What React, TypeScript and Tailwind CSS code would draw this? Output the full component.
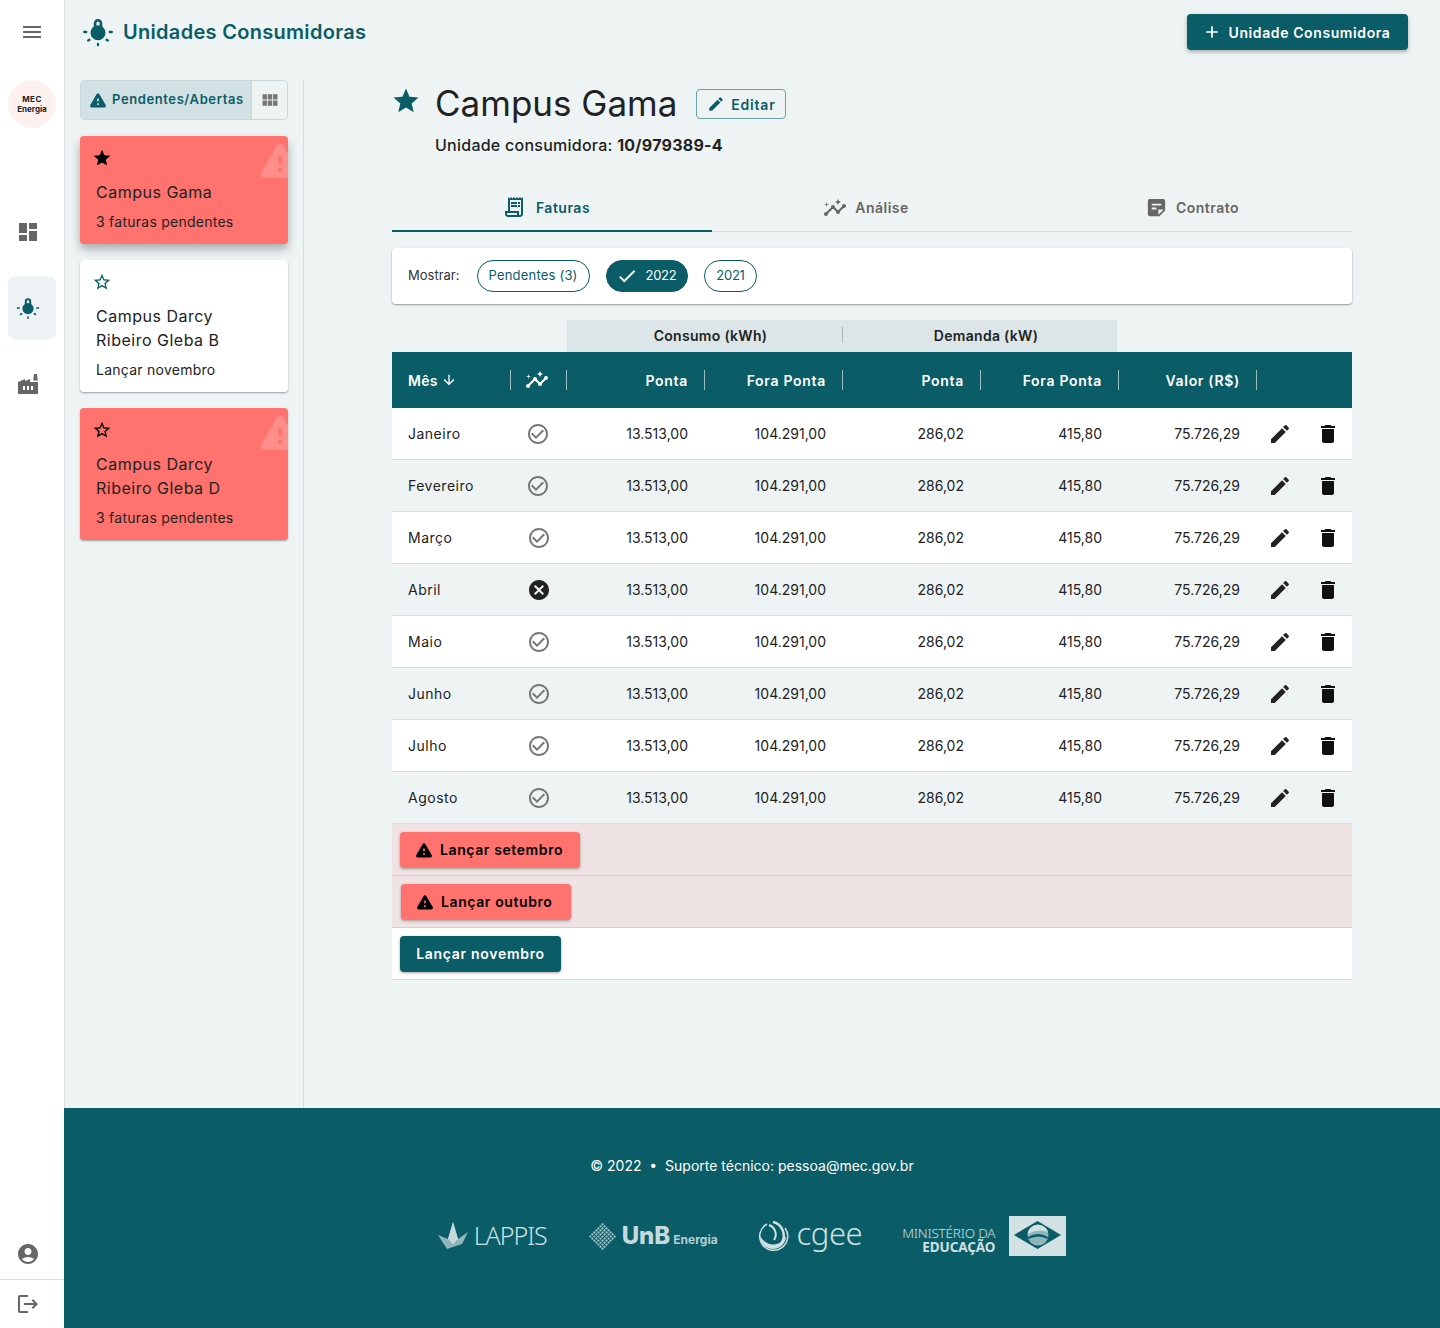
import React from "react";
import {
  MdMenu, MdDashboard, MdFactory, MdAccountCircle, MdLogout, MdViewModule, MdStar, MdStarBorder,
  MdEdit, MdDelete, MdAdd, MdCheck, MdOutlineReceiptLong, MdInsights, MdStickyNote2, MdArrowDownward,
  MdCheckCircleOutline, MdCancel,
} from "react-icons/md";

function Warn({ className }: { className?: string }) {
  return (
    <svg viewBox="0 0 24 24" fill="currentColor" className={className}>
      <path d="M4.47 21h15.06c1.54 0 2.5-1.67 1.73-3L13.73 4.99c-.77-1.33-2.69-1.33-3.46 0L2.74 18c-.77 1.33.19 3 1.73 3zM12 14c-.55 0-1-.45-1-1v-2c0-.55.45-1 1-1s1 .45 1 1v2c0 .55-.45 1-1 1zm1 4h-2v-2h2v2z" />
    </svg>
  );
}

function Bulb({ className }: { className?: string }) {
  return (
    <svg viewBox="0 0 24 24" className={className} fill="none">
      <circle cx="12" cy="12.6" r="5.6" fill="currentColor" />
      <path fillRule="evenodd" clipRule="evenodd" fill="currentColor" d="M12 2.2a3.2 3.2 0 0 1 3.2 3.2V9H8.8V5.4A3.2 3.2 0 0 1 12 2.2zm0 2a1.2 1.2 0 0 0-1.2 1.2V8h2.4V5.4A1.2 1.2 0 0 0 12 4.2z" />
      <path stroke="currentColor" strokeWidth="1.7" strokeLinecap="round" d="M1.6 12h1.6M20.8 12h1.6M12 21v1M4.6 18.4l1-.6M19.4 18.4l-1-.6" />
    </svg>
  );
}

function UnitCard({ title, sub, alert, star, tall, shadow }: { title: string[]; sub: string; alert?: boolean; star?: boolean; tall?: boolean; shadow?: string }) {
  return (
    <div className={`relative overflow-hidden rounded px-4 pt-3 ${tall ? "h-[132px]" : "h-[108px]"} ${alert ? "bg-[#ff726d]" : "bg-white"} ${shadow ?? "shadow-[0_1px_2px_rgba(0,0,0,0.35)]"}`}>
      {alert && <Warn className="absolute right-[-16px] top-0 h-12 w-12 text-white/20" />}
      {star ? <MdStar className="-ml-[4px] h-5 w-5 text-black" /> : <MdStarBorder className={`-ml-[4px] h-5 w-5 ${alert ? "text-black" : "text-[#0a5c67]"}`} />}
      <div className="mt-[12px] text-[16px] leading-6 tracking-[0.5px] text-[#222]">
        {title.map((t) => <div key={t}>{t}</div>)}
      </div>
      <div className="mt-[8px] text-[14px] leading-5 tracking-[0.25px] text-[#222]">{sub}</div>
    </div>
  );
}

const months = [
  ["Janeiro", "ok", false], ["Fevereiro", "ok", false], ["Março", "ok", true], ["Abril", "x", true],
  ["Maio", "ok", true], ["Junho", "ok", true], ["Julho", "ok", true], ["Agosto", "ok", true],
] as const;

const COLS = "grid grid-cols-[119px_56px_138px_138px_138px_138px_138px_47px_48px] items-center";

function Th({ children, right = true }: { children: React.ReactNode; right?: boolean }) {
  return <div className={`flex h-5 items-center border-r border-white/60 pr-4 text-[14px] font-semibold text-white ${right ? "justify-end tracking-[0.7px]" : ""}`}>{children}</div>;
}

function Num({ children }: { children: React.ReactNode }) {
  return <div className="pr-[17px] text-right text-[14px] text-[#222]">{children}</div>;
}

function Chip({ children, on }: { children: React.ReactNode; on?: boolean }) {
  return <div className={`flex h-8 items-center gap-2 rounded-full border border-[#0a5c67] px-[11px] text-[13px] tracking-[0.2px] ${on ? "bg-[#0a5c67] text-white" : "text-[#0a5c67]"}`}>{children}</div>;
}

export default function App() {
  return (
    <div className="flex min-h-[1328px] w-[1440px] bg-[#eef4f4] [font-family:Inter,'Noto_Sans',sans-serif] text-[#222]">
      <aside className="flex w-[65px] shrink-0 flex-col border-r border-[#dde3e3] bg-white">
        <div className="flex h-16 items-center justify-center text-[#666]"><MdMenu className="h-6 w-6" /></div>
        <div className="mx-2 mt-4 flex h-12 w-12 flex-col items-center justify-center rounded-full bg-[#fdf1f0] text-[8px] font-bold leading-[10px] text-[#222]">
          <span className="tracking-[0.5px]">MEC</span><span>Energia</span>
        </div>
        <div className="mt-[92px] flex h-6 pl-4 text-[#666]"><MdDashboard className="h-6 w-6" /></div>
        <div className="mx-2 mt-[32px] flex h-16 w-12 items-center rounded-lg bg-[#edf2f4] pl-2 text-[#0a5c67]"><Bulb className="h-6 w-6" /></div>
        <div className="mt-[32px] flex h-6 pl-4 text-[#666]"><MdFactory className="h-6 w-6" /></div>
        <div className="flex-1" />
        <div className="flex h-[37px] items-start pl-4 text-[#666]"><MdAccountCircle className="h-6 w-6" /></div>
        <div className="flex h-[49px] items-center border-t border-[#ddd] pl-4 text-[#666]"><MdLogout className="h-6 w-6" /></div>
      </aside>

      <div className="flex min-w-0 flex-1 flex-col">
        <header className="flex h-16 shrink-0 items-center justify-between pl-[17px] pr-8">
          <div className="flex items-center gap-[9px] text-[#0a5c67]">
            <Bulb className="h-8 w-8" />
            <h1 className="text-[20px] font-semibold tracking-[0.3px]">Unidades Consumidoras</h1>
          </div>
          <button className="flex h-9 w-[221px] items-center justify-center gap-[7px] rounded bg-[#0a5c67] pr-[3px] text-[14px] font-semibold tracking-[0.6px] text-white shadow-[0_2px_4px_rgba(0,0,0,0.3)]">
            <MdAdd className="h-5 w-5" />Unidade Consumidora
          </button>
        </header>

        <div className="flex flex-1">
          <div className="mt-4 w-[239px] shrink-0 border-r border-[#d5dcdc] pl-[15px] pr-[15px]">
            <div className="flex h-10 w-[208px] overflow-hidden rounded border border-[#c9d8da]">
              <div className="flex w-[171px] items-center gap-[4px] border-r border-[#c9d8da] bg-[#d2e1e3] pl-[7px] text-[13px] font-semibold tracking-[0.6px] text-[#0a5c67]">
                <Warn className="h-5 w-5 shrink-0" />Pendentes/Abertas
              </div>
              <div className="flex flex-1 items-center justify-center text-[#777]"><MdViewModule className="h-5 w-5" /></div>
            </div>
            <div className="mt-4 flex flex-col gap-4">
              <UnitCard title={["Campus Gama"]} sub="3 faturas pendentes" alert star shadow="shadow-[0_5px_10px_rgba(0,0,0,0.3)]" />
              <UnitCard title={["Campus Darcy", "Ribeiro Gleba B"]} sub="Lançar novembro" tall />
              <UnitCard title={["Campus Darcy", "Ribeiro Gleba D"]} sub="3 faturas pendentes" alert tall />
            </div>
          </div>

          <main className="ml-[88px] w-[960px] shrink-0 pt-[16px]">
            <div className="flex h-[48px] items-center">
              <MdStar className="h-[30px] w-[30px] -translate-y-[3px] text-[#0a5c67] -ml-[1px]" />
              <h2 className="ml-[14px] pb-[2px] text-[35px] font-normal leading-10 text-[#222]">Campus Gama</h2>
              <button className="ml-[19px] flex h-[30px] w-[90px] items-center justify-center gap-[6px] rounded border border-[#6ca0a8] text-[14px] font-semibold tracking-[0.8px] text-[#0a5c67]">
                <MdEdit className="h-[18px] w-[18px]" />Editar
              </button>
            </div>
            <p className="ml-[43px] mt-[5px] text-[16px] font-medium leading-6 tracking-[0.25px] text-[#222]">Unidade consumidora: <b className="font-bold">10/979389-4</b></p>

            <div className="mt-[27px] flex h-[48px] border-b border-[#d5dcdc] tracking-[0.5px]">
              <div className="-mb-px flex w-[320px] items-center justify-center gap-[10px] border-b-2 border-[#0a5c67] pr-3 text-[14px] font-semibold text-[#0a5c67]"><MdOutlineReceiptLong className="h-6 w-6" />Faturas</div>
              <div className="flex w-[320px] items-center justify-center gap-[8px] pr-3 text-[14px] font-semibold text-[#666]"><MdInsights className="h-6 w-6" />Análise</div>
              <div className="flex w-[320px] items-center justify-center gap-[8px] text-[14px] font-semibold text-[#666]"><MdStickyNote2 className="h-[23px] w-[23px]" />Contrato</div>
            </div>

            <div className="mt-4 flex h-14 items-center rounded bg-white pl-4 shadow-[0_1px_2px_rgba(0,0,0,0.4)]">
              <span className="mr-[17px] text-[13px] text-[#333]">Mostrar:</span>
              <div className="flex gap-4">
                <Chip>Pendentes (3)</Chip>
                <Chip on><MdCheck className="-ml-[2px] h-[22px] w-[22px]" /><span className="tracking-[-0.3px]">2022</span></Chip>
                <Chip><span className="tracking-[-0.3px]">2021</span></Chip>
              </div>
            </div>

            <div className="ml-[175px] mt-4 flex h-8 w-[550px] items-center bg-[#dce6e8] pb-[2px] text-[14px] font-semibold tracking-[0.3px] text-[#222]">
              <div className="flex h-4 w-[276px] items-center justify-center border-r border-[#a9b5b7] pl-3">Consumo (kWh)</div>
              <div className="flex flex-1 items-center justify-center pl-3">Demanda (kW)</div>
            </div>

            <div className={`${COLS} h-14 bg-[#0a5c67]`}>
              <Th right={false}><span className="pl-4 tracking-[0.3px]">Mês</span><MdArrowDownward className="ml-[3px] h-4 w-4" /></Th>
              <Th right={false}><MdInsights className="ml-[14px] h-6 w-6 shrink-0" /></Th>
              <Th>Ponta</Th><Th>Fora Ponta</Th><Th>Ponta</Th><Th>Fora Ponta</Th><Th>Valor (R$)</Th>
            </div>

            {months.map(([m, st, shift], i) => (
              <div key={m} className={`${COLS} h-[52px] border-b border-[#d9dfdf] ${i % 2 === 0 ? "bg-white" : ""}`}>
                <div className="pl-4 text-[14px] tracking-[0.5px] text-[#222]">{m}</div>
                <div className={`flex ${shift ? "pl-4" : "pl-[15px]"}`}>
                  {st === "ok" ? <MdCheckCircleOutline className="h-6 w-6 text-[#777]" /> : <MdCancel className="h-6 w-6 text-[#222]" />}
                </div>
                <Num>13.513,00</Num><Num>104.291,00</Num><Num>286,02</Num><Num>415,80</Num><Num>75.726,29</Num>
                <div className="flex justify-center pr-[2px] text-[#222]"><MdEdit className="h-6 w-6" /></div>
                <div className="flex justify-center text-[#111]"><MdDelete className="h-6 w-6" /></div>
              </div>
            ))}

            <div className="flex h-[52px] items-center border-b border-[#d9cfd0] bg-[#efe3e3] pl-2">
              <button className="flex h-9 w-[180px] items-center gap-[6px] rounded bg-[#ff726d] pl-[14px] text-[14px] font-semibold tracking-[0.6px] text-black shadow-[0_1px_3px_rgba(0,0,0,0.35)]"><Warn className="h-5 w-5" />Lançar setembro</button>
            </div>
            <div className="flex h-[52px] items-center border-b border-[#d9cfd0] bg-[#efe3e3] pl-[9px]">
              <button className="flex h-9 w-[170px] items-center gap-[6px] rounded bg-[#ff726d] pl-[14px] text-[14px] font-semibold tracking-[0.6px] text-black shadow-[0_1px_3px_rgba(0,0,0,0.35)]"><Warn className="h-5 w-5" />Lançar outubro</button>
            </div>
            <div className="flex h-[52px] items-center border-b border-[#d9dfdf] bg-white pl-2">
              <button className="flex h-9 w-[161px] items-center justify-center rounded bg-[#0a5c67] text-[14px] font-semibold tracking-[0.7px] text-white shadow-[0_1px_3px_rgba(0,0,0,0.35)]">Lançar novembro</button>
            </div>
          </main>
        </div>

        <footer className="-ml-px flex h-[220px] shrink-0 flex-col items-center bg-[#0a5c67] text-white">
          <p className="mt-[48px] text-[14px] leading-5">© 2022 &nbsp;•&nbsp; Suporte técnico: pessoa@mec.gov.br</p>
          <div className="mt-[40px] flex h-10 items-center text-[#cfe0e2]">
            <svg viewBox="0 0 30 28" className="h-7 w-[30px]">
              <path d="M0 13 L10 17 L15 0 L20 17 L30 10 L24 22 L9 27 Z" fill="#8fb6bb" />
              <path d="M15 0 L20 17 L15 22 L10 17Z" fill="#c6d9dc" />
            </svg>
            <span className="ml-[6px] [font-family:'Noto_Sans',sans-serif] text-[25px] font-light tracking-[-1px] text-[#cfe0e2]">LAPPIS</span>
            <svg viewBox="0 0 30 30" className="ml-[41px] h-[29px] w-[29px]" fill="#a9c7cb">
              {Array.from({ length: 7 }).flatMap((_, r) =>
                Array.from({ length: 7 }).map((_, c) => {
                  const x = 15 + (c - r) * 2.1;
                  const y = 15 + (c + r - 6) * 2.1;
                  return <circle key={`${r}-${c}`} cx={x} cy={y} r={1.15} />;
                })
              )}
            </svg>
            <span className="ml-[5px] text-[24px] font-extrabold text-[#c6dade]">UnB</span>
            <span className="ml-[3px] mt-2 text-[12px] font-bold text-[#b5cfd3]">Energia</span>
            <svg viewBox="0 0 32 32" className="ml-[39px] h-[32px] w-[32px]" fill="none" stroke="#cfe0e2">
              <path d="M10 4 A14 14 0 1 0 28 8" strokeWidth="1.5" />
              <path d="M3 16 A13 13 0 0 0 29 16 A14 14 0 0 1 6 20 Z" fill="#cfe0e2" stroke="none" />
              <path d="M16 2 A14 14 0 0 1 24 24" strokeWidth="2.5" />
              <path d="M12 5 A10 10 0 0 1 17 20" strokeWidth="2" />
            </svg>
            <span className="ml-[8px] pb-[6px] [font-family:'Noto_Sans',sans-serif] text-[31px] font-light leading-none tracking-[-0.5px] text-[#cfe0e2]">cgee</span>
            <div className="ml-[40px] mt-2 flex flex-col items-end text-[#cfe0e2]">
              <span className="[font-family:'Noto_Sans',sans-serif] text-[13.5px] font-light leading-[14px] tracking-[-0.2px]">MINISTÉRIO DA</span>
              <span className="[font-family:'Noto_Sans',sans-serif] text-[13.5px] font-bold leading-[14px] tracking-[-0.1px]">EDUCAÇÃO</span>
            </div>
            <svg viewBox="0 0 57 40" className="ml-[14px] h-10 w-[57px]">
              <rect width="57" height="40" fill="#d2e1e3" />
              <path d="M5 19 L28.5 5 L52 19 L28.5 33 Z" fill="#0a5c67" />
              <circle cx="29" cy="19" r="10.5" fill="#8fb6bb" />
              <path d="M18.6 18 A10.5 10.5 0 0 1 39 16 Q29 12 18.6 18 Z" fill="#d2e1e3" />
              <path d="M19 21 Q29 15 39 21 L38.5 23 Q29 18 19.5 23 Z" fill="#0a5c67" />
            </svg>
          </div>
        </footer>
      </div>
    </div>
  );
}
